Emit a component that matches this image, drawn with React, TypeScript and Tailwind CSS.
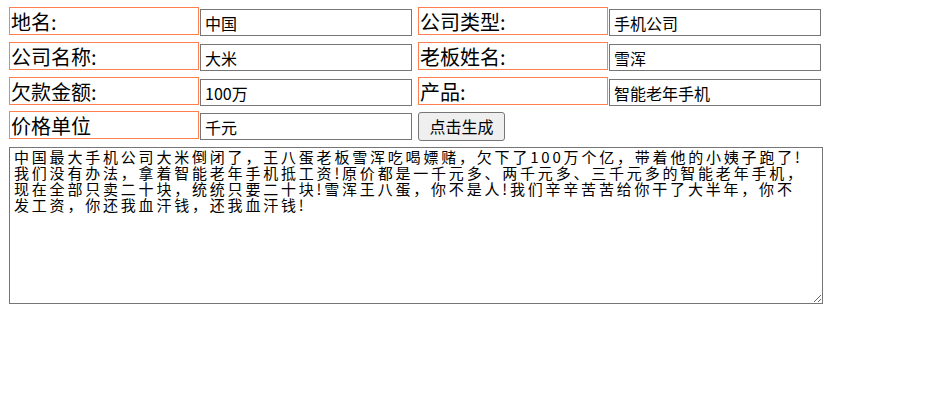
import React from "react";

const labelCls =
  "w-[190px] h-[28px] shrink-0 border border-[#ff7f50] text-[20px] leading-[24px] pt-[2px] pl-[1px] text-black";
const inputCls =
  "ml-[1px] mt-[2px] w-[212px] h-[27px] shrink-0 border border-[#767676] px-[4px] text-[16px] leading-[25px] text-black bg-white outline-none";

const text =
  "中国最大手机公司大米倒闭了，王八蛋老板雪浑吃喝嫖赌，欠下了100万个亿，带着他的小姨子跑了!\n" +
  "我们没有办法，拿着智能老年手机抵工资!原价都是一千元多、两千元多、三千元多的智能老年手机，\n" +
  "现在全部只卖二十块，统统只要二十块!雪浑王八蛋，你不是人!我们辛辛苦苦给你干了大半年，你不\n" +
  "发工资，你还我血汗钱，还我血汗钱!";

function Row({
  l1,
  v1,
  l2,
  v2,
  button,
  className,
}: {
  l1: string;
  v1: string;
  l2?: string;
  v2?: string;
  button?: string;
  className?: string;
}) {
  return (
    <div className={"flex items-start h-[28px] " + (className ?? "")}>
      <div className={labelCls}>{l1}</div>
      <input className={inputCls} defaultValue={v1} />
      {l2 !== undefined ? (
        <>
          <div className={labelCls + " ml-[6px]"}>{l2}</div>
          <input className={inputCls} defaultValue={v2} />
        </>
      ) : (
        <button className="ml-[6px] mt-[1px] w-[87px] h-[29px] shrink-0 border border-[#767676] rounded-[3px] bg-[#efefef] text-[16px] leading-[27px] text-black">
          {button}
        </button>
      )}
    </div>
  );
}

export default function App() {
  return (
    <div
      className="w-[931px] h-[403px] bg-white pl-[9px] pt-[7px]"
      style={{ fontFamily: '"Noto Sans CJK SC", "Noto Sans", sans-serif' }}
    >
      <Row l1="地名:" v1="中国" l2="公司类型:" v2="手机公司" />
      <Row className="mt-[7px]" l1="公司名称:" v1="大米" l2="老板姓名:" v2="雪浑" />
      <Row className="mt-[7px]" l1="欠款金额:" v1="100万" l2="产品:" v2="智能老年手机" />
      <Row className="mt-[6px]" l1="价格单位" v1="千元" button="点击生成" />
      <textarea
        readOnly
        defaultValue={text}
        className="block mt-[8px] w-[814px] h-[157px] border border-[#767676] px-[4px] pt-[1px] text-[15px] leading-[16px] tracking-[2.8px] text-black whitespace-pre overflow-hidden outline-none"
      />
    </div>
  );
}
